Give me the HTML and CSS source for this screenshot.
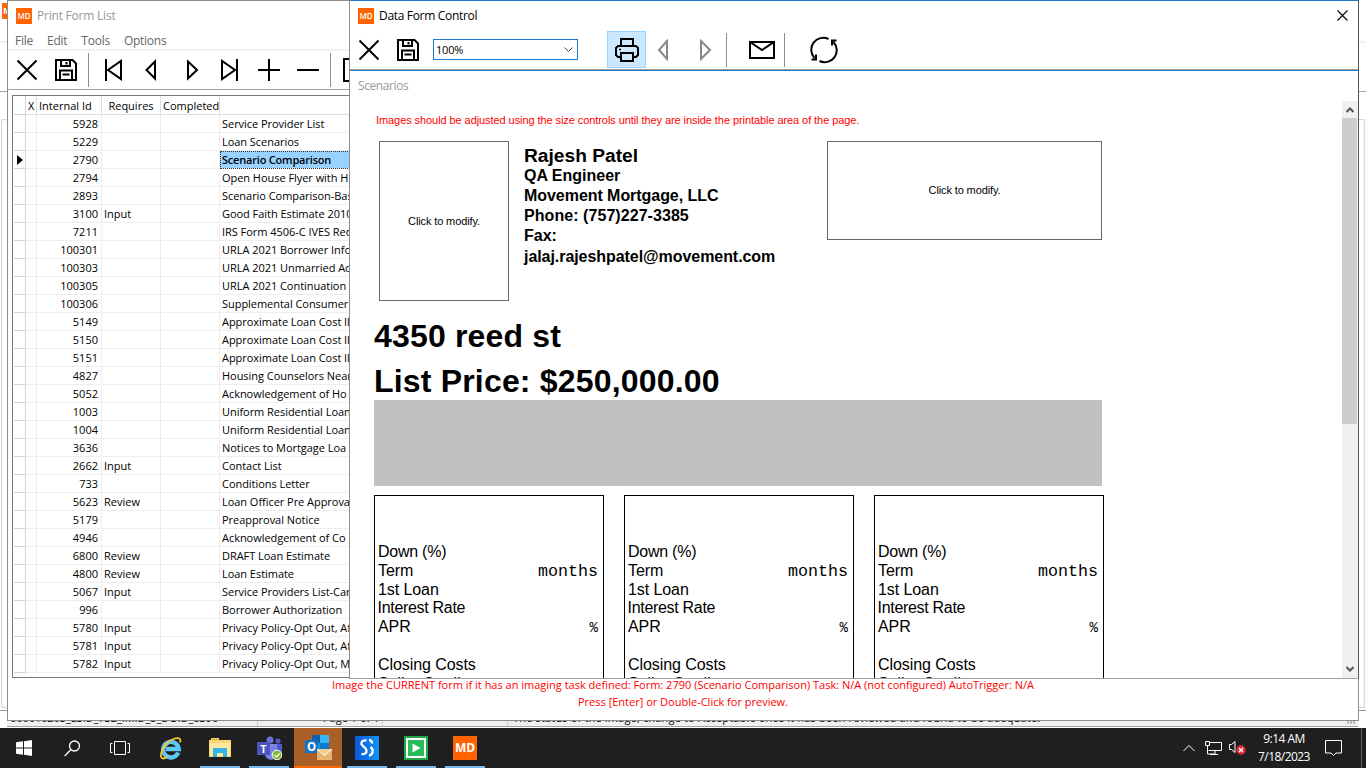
FILE: index.html
```
<!DOCTYPE html>
<html lang="en">
<head>
<meta charset="utf-8">
<title>Print Form List</title>
<link rel="stylesheet" href="styles.css">
</head>
<body>
<div class="desktop">
  <div class="back">
    <div class="back-title"><span class="back-logo">M</span></div>
    <div class="back-menu"></div>
    <div class="back-body"><div class="back-frame"></div></div>
    <div class="back-rule"></div>
    <div class="back-status">
      <span class="cell c1">000010203_ESID_732_IMID_5_DOID_8390</span>
      <span class="cell c2">Page 1 of 1</span>
      <span class="cell c3"></span>
      <span class="cell c4">The status of the image, change to Acceptable once it has been reviewed and found to be adequate.</span>
      <span class="grip"></span>
    </div>
  </div>

  <section class="window list-window">
    <header class="titlebar inactive"><span class="logo">MD</span><span class="title">Print Form List</span></header>
    <nav class="menu"><span>File</span><span>Edit</span><span>Tools</span><span>Options</span></nav>
    <div class="toolbar list-tools">
      <svg class="t-close" width="22" height="22" viewBox="0 0 22 22"><path d="M1.500 1.500l19 19M20.500 1.500l-19 19"/></svg>
      <svg class="t-save" width="22" height="22" viewBox="0 0 22 22"><path d="M1 1h16.500l3.500 3.500V21H1zM5 21V11.500h12V21M6 1v6h9V1M11.500 3v2.500M7.500 15.500h7"/></svg>
      <i class="sep s1"></i>
      <svg class="t-first" width="18" height="22" viewBox="0 0 18 22"><path d="M1 0v22M16 2v18L3 11z"/></svg>
      <svg class="t-prev" width="12" height="22" viewBox="0 0 12 22"><path d="M10 2.500v17L1.500 11z"/></svg>
      <svg class="t-next" width="12" height="22" viewBox="0 0 12 22"><path d="M1 2.500v17L10 11z"/></svg>
      <svg class="t-last" width="18" height="22" viewBox="0 0 18 22"><path d="M16 0v22M1 2v18L14 11z"/></svg>
      <svg class="t-plus" width="22" height="22" viewBox="0 0 22 22"><path d="M11 0v22M0 11h22"/></svg>
      <svg class="t-minus" width="22" height="22" viewBox="0 0 22 22"><path d="M0 11h22"/></svg>
      <i class="sep s2"></i>
      <svg class="t-page" width="22" height="24" viewBox="0 0 22 24"><path d="M1 1h20v22H1z"/></svg>
    </div>
    <div class="grid">
      <div class="row head"><span></span><span>X</span><span>Internal Id</span><span>Requires</span><span>Completed</span><span></span></div>
      <div class="rows" id="rows"></div>
    </div>
    <div class="hint"><p class="h1">Image the CURRENT form if it has an imaging task defined: Form: 2790 (Scenario Comparison) Task: N/A (not configured) AutoTrigger: N/A</p><p class="h2">Press [Enter] or Double-Click for preview.</p></div>
  </section>

  <section class="window form-window">
    <div class="form-chrome">
      <header class="titlebar"><span class="logo">MD</span><span class="title">Data Form Control</span>
        <svg class="win-close" width="11" height="11" viewBox="0 0 11 11"><path d="M.5.5l10 10M10.500.5l-10 10"/></svg></header>
      <div class="toolbar form-tools">
        <svg class="f-close" width="22" height="22" viewBox="0 0 22 22"><path d="M1.500 1.500l19 19M20.500 1.500l-19 19"/></svg>
        <svg class="f-save" width="22" height="22" viewBox="0 0 22 22"><path d="M1 1h16.500l3.500 3.500V21H1zM5 21V11.500h12V21M6 1v6h9V1M11.500 3v2.500M7.500 15.500h7"/></svg>
        <div class="combo"><span>100%</span><svg width="9" height="6" viewBox="0 0 9 6"><path d="M.5.5l4 4 4-4"/></svg></div>
        <div class="print"><svg width="24" height="24" viewBox="0 0 24 24"><path d="M6 8V1h12v7M6 19H3l-2-2v-7l2-2h18l2 2v7l-2 2h-3M6 15h12v8H6z"/><path class="dot" d="M4 11.500h2"/></svg></div>
        <svg class="f-prev dim" width="12" height="22" viewBox="0 0 12 22"><path d="M10 2v18L2 11z"/></svg>
        <svg class="f-next dim" width="12" height="22" viewBox="0 0 12 22"><path d="M1 2v18L10 11z"/></svg>
        <i class="sep s3"></i>
        <svg class="f-mail" width="26" height="18" viewBox="0 0 26 18"><path d="M1 1h24v16H1zM1 1l12 8L25 1"/></svg>
        <i class="sep s4"></i>
        <svg class="f-sync" width="28" height="28" viewBox="0 0 28 28"><path d="M18.500 3A12 12 0 0 0 4.500 22M9.500 25A12 12 0 0 0 23.500 6M1.500 23.500H6v-5M26.500 4.500H22v5"/></svg>
      </div>
    </div>
    <div class="tab">Scenarios</div>
    <div class="view">
      <main class="doc">
        <p class="warning">Images should be adjusted using the size controls until they are inside the printable area of the page.</p>
        <div class="profile">
          <div class="pic portrait">Click to modify.</div>
          <div class="contact">
            <p class="name">Rajesh Patel</p><p class="role">QA Engineer</p><p class="company">Movement Mortgage, LLC</p><p class="phone">Phone: (757)227-3385</p><p>Fax:</p><p class="mail">jalaj.rajeshpatel@movement.com</p>
          </div>
          <div class="pic banner">Click to modify.</div>
        </div>
        <h1 class="address">4350 reed st</h1>
        <h1 class="price">List Price: $250,000.00</h1>
        <div class="greybar"></div>
        <div class="cards">
          <div class="card"><p class="down-pay">Down (%)</p><p>Term<b class="months">months</b></p><p>1st Loan</p><p class="rate">Interest Rate</p><p>APR<b class="pct">%</b></p><p></p><p>Closing Costs</p><p>Seller Credit</p></div>
          <div class="card"><p class="down-pay">Down (%)</p><p>Term<b class="months">months</b></p><p>1st Loan</p><p class="rate">Interest Rate</p><p>APR<b class="pct">%</b></p><p></p><p>Closing Costs</p><p>Seller Credit</p></div>
          <div class="card"><p class="down-pay">Down (%)</p><p>Term<b class="months">months</b></p><p>1st Loan</p><p class="rate">Interest Rate</p><p>APR<b class="pct">%</b></p><p></p><p>Closing Costs</p><p>Seller Credit</p></div>
        </div>
      </main>
      <aside class="scroll">
        <svg width="8" height="6" viewBox="0 0 8 6"><path d="M.5 5L4 1.500 7.500 5"/></svg>
        <div class="thumb"></div>
        <svg class="down" width="8" height="6" viewBox="0 0 8 6"><path d="M.5 1L4 4.500 7.500 1"/></svg>
      </aside>
    </div>
  </section>

  <footer class="taskbar">
    <div class="task"><svg width="16" height="16" viewBox="0 0 16 16"><path fill="#fff" d="M0 2.300L7 1.300V7.500H0zM8 1.200L16 0V7.500H8zM0 8.500H7V14.700L0 13.700zM8 8.500H16V16L8 14.800z"/></svg></div>
    <div class="task"><svg width="17" height="17" viewBox="0 0 17 17"><circle cx="10.500" cy="6" r="5" fill="none" stroke="#fff" stroke-width="1.300"/><path d="M7 9.500L.7 16" stroke="#fff" stroke-width="1.300"/></svg></div>
    <div class="task"><svg width="20" height="14" viewBox="0 0 20 14" fill="none" stroke="#fff"><path d="M4.500.5h11v13h-11zM2.500 2.500h-2v9h2M17.500 2.500h2v9h-2"/></svg></div>
    <div class="task first-app"><svg width="24" height="24" viewBox="0 0 24 24"><path d="M19.200 16.500A7.800 7.800 0 1 1 19.700 13H7" fill="none" stroke="#5cc9f5" stroke-width="4.400"/><path d="M21 6.500C23 1 17 .5 10 5.500 3 11 .3 20 2.800 22c1.500 1 4-.2 5.500-1.500" fill="none" stroke="#f6c52c" stroke-width="1.800"/></svg></div>
    <div class="task open"><svg width="22" height="20" viewBox="0 0 22 20"><path d="M0 2h2V0h8v2h12v17H0z" fill="#f8d775"/><path d="M1 5h20v13H1z" fill="#ffe9a0"/><path d="M3 1h6v1H3z" fill="#e8a020"/><path d="M4 10h14v9h-4v-4H8v4H4z" fill="#35b4e8"/></svg></div>
    <div class="task open"><svg width="25" height="24" viewBox="0 0 25 24"><circle cx="13" cy="4" r="3.500" fill="#6b70d8"/><circle cx="21" cy="5" r="2.600" fill="#5059c9"/><path d="M17 8h8v8a5 5 0 0 1-7 4z" fill="#5059c9"/><path d="M8 8h12v8a6 6 0 0 1-12 3z" fill="#7b83eb"/><path d="M0 6h13v13H0z" fill="#4b53bc"/><text x="3.200" y="16.500" fill="#fff" font-family="Open Sans" font-size="11" font-weight="700">T</text><circle cx="20" cy="19" r="4.800" fill="#80b82d" stroke="#fff"/><path d="M17.500 19l2 2 3-3.500" fill="none" stroke="#fff" stroke-width="1.300"/></svg></div>
    <div class="task open active"><svg width="27" height="26" viewBox="0 0 27 26"><path d="M7 0h17v17H7z" fill="#1490df"/><path d="M7 0h8v8H7z" fill="#0b60a8"/><path d="M15 0h9v8h-9z" fill="#37b8f2"/><path d="M15 8h9v8h-9z" fill="#0f78d4"/><path d="M0 5h13v13H0z" fill="#0f72c4"/><text x="2" y="16" fill="#fff" font-family="Open Sans" font-size="11.500" font-weight="700">O</text><path d="M12 14h15v11H12z" fill="#e9b36d"/><path d="M12 14l7.500 6.500L27 14" fill="#f4cd90" stroke="#fff"/></svg></div>
    <div class="task open"><svg width="24" height="24" viewBox="0 0 24 24"><defs><linearGradient id="blue"><stop stop-color="#0758d8"/><stop offset="1" stop-color="#1692f5"/></linearGradient></defs><path d="M0 0h24v24H0z" fill="url(#blue)"/><path d="M11.500 4.500C8 4 6 5.500 6.500 8c.5 2.500 4.500 3 5 6.500.3 2.500-2 4-5 3.500" fill="none" stroke="#fff" stroke-width="2.400"/><path d="M15.500 11c3.500 2.500 2.500 8-1.500 8.500M14 4c2 .2 3 1.500 3.200 3.500" fill="none" stroke="#fff" stroke-width="2.400"/></svg></div>
    <div class="task open"><svg width="24" height="24" viewBox="0 0 24 24"><path d="M0 0h24v24H0z" fill="#1fa84c"/><path d="M3 3h18v18H3z" fill="#2abb5b" stroke="#fff" stroke-width="2"/><path d="M8.500 7.500v9l8-4.500z" fill="#fff"/></svg></div>
    <div class="task open"><span class="app-logo">MD</span></div>
    <div class="tray">
      <svg class="chev" width="12" height="8" viewBox="0 0 12 8"><path d="M.5 7L6 1.500 11.500 7"/></svg>
      <svg class="net" width="17" height="14" viewBox="0 0 17 14"><path d="M5 1.500h11.500v8H3.500M.5.500h4v4h-4zM2.500 4.500v8.500H10M10 9.500V13M5 13.500h8"/></svg>
      <svg class="vol" width="18" height="16" viewBox="0 0 18 16"><path d="M.5 4.500h2l3.500-3v11l-3.500-3h-2z"/><circle cx="12" cy="10" r="4.700" fill="#e02b35" stroke="none"/><path d="M10 8l4 4M14 8l-4 4" stroke-width="1.400"/></svg>
      <div class="clock"><span>9:14 AM</span><span>7/18/2023</span></div>
      <svg class="note" width="17" height="17" viewBox="0 0 17 17"><path d="M.5.5h16v12.500H11l-2.500 2.500L6 13H.5z"/></svg>
      <i class="peek"></i>
    </div>
  </footer>
</div>
<script src="rows.js"></script>
</body>
</html>
```

FILE: rows.js
```
const forms = [
  [5928, '', 'Service Provider List'], [5229, '', 'Loan Scenarios'], [2790, '', 'Scenario Comparison'],
  [2794, '', 'Open House Flyer with H'], [2893, '', 'Scenario Comparison-Bas'], [3100, 'Input', 'Good Faith Estimate 2010'],
  [7211, '', 'IRS Form 4506-C IVES Req'], [100301, '', 'URLA 2021 Borrower Info'], [100303, '', 'URLA 2021 Unmarried Ad'],
  [100305, '', 'URLA 2021 Continuation'], [100306, '', 'Supplemental Consumer'], [5149, '', 'Approximate Loan Cost Ill'],
  [5150, '', 'Approximate Loan Cost Ill'], [5151, '', 'Approximate Loan Cost Ill'], [4827, '', 'Housing Counselors Near'],
  [5052, '', 'Acknowledgement of Ho'], [1003, '', 'Uniform Residential Loan'], [1004, '', 'Uniform Residential Loan'],
  [3636, '', 'Notices to Mortgage Loa'], [2662, 'Input', 'Contact List'], [733, '', 'Conditions Letter'],
  [5623, 'Review', 'Loan Officer Pre Approva'], [5179, '', 'Preapproval Notice'], [4946, '', 'Acknowledgement of Co'],
  [6800, 'Review', 'DRAFT Loan Estimate'], [4800, 'Review', 'Loan Estimate'], [5067, 'Input', 'Service Providers List-Can'],
  [996, '', 'Borrower Authorization'], [5780, 'Input', 'Privacy Policy-Opt Out, Af'], [5781, 'Input', 'Privacy Policy-Opt Out, Af'],
  [5782, 'Input', 'Privacy Policy-Opt Out, M']
];
document.getElementById('rows').innerHTML = forms.map(([id, req, name]) =>
  `<div class="row${id === 2790 ? ' current' : ''}"><span></span><span></span><span>${id}</span><span>${req}</span><span></span><span>${name}</span></div>`
).join('');
```

FILE: styles.css
```
* { box-sizing: border-box; }
body { margin: 0; background: #fff; font-family: "Open Sans", "Noto Sans", sans-serif; font-size: 11px; color: #000; overflow: hidden; }
p, h1 { margin: 0; }
svg { display: block; flex: none; }
.desktop { position: relative; width: 1366px; height: 768px; overflow: hidden; }

.back { height: 728px; display: flex; flex-direction: column; }
.back-title { height: 43px; border-bottom: 2px solid #f0f0f0; padding: 3px 0 0 2px; }
.back-logo { display: block; width: 16px; height: 16px; background: #ff6200; color: #fff; font-size: 9px; font-weight: 700; line-height: 15px; padding-left: 1px; }
.back-menu { height: 49px; border-bottom: 1px solid #a0a0a0; }
.back-body { height: 618px; padding: 27px 1px 2px 1px; }
.back-frame { height: 589px; border: 1px solid #dcdcdc; box-shadow: inset 0 0 0 1px #f4f4f4; }
.back-rule { height: 1px; background: #999; }
.back-status { height: 16px; margin: 0 8px 0 7px; display: flex; border-bottom: 1px solid #a0a0a0; background: #f0f0f0; line-height: 14px; position: relative; }
.cell { flex: none; white-space: nowrap; overflow: hidden; border-right: 1px solid #d0d0d0; }
.c1 { width: 251px; padding-left: 3px; letter-spacing: -.07px; }
.c2 { width: 125px; padding-left: 65px; }
.c3 { width: 125px; }
.c4 { flex: 1; padding-left: 5px; border: 0; letter-spacing: .17px; }
.grip { width: 8px; height: 4px; align-self: flex-end; margin: 0 3px 2px 0; background: repeating-linear-gradient(90deg, #bbb 0 2px, transparent 2px 3px); }

.window { position: absolute; top: 0; background: #fff; display: flex; flex-direction: column; overflow: hidden; }
.list-window { left: 7px; width: 1352px; height: 721px; border: 1px solid #8c8c8c; }
.form-window { left: 349px; width: 1010px; height: 679px; border-right: 1px solid #555; border-bottom: 1px solid #a0a0a0; border-left: 1px solid #8c8c8c; }
.form-chrome { height: 71px; margin: 0 -1px; border: 1px solid #1979ca; box-shadow: inset 0 -1px #a0a0a0; flex: none; }
.titlebar { height: 29px; display: flex; align-items: center; font-size: 12px; letter-spacing: -.32px; padding-left: 8px; flex: none; }
.inactive { color: #999; letter-spacing: -.22px; }
.logo { width: 16px; height: 16px; background: #ff6200; color: #fff; font-size: 8px; font-weight: 600; line-height: 15px; text-align: center; margin-right: 5px; letter-spacing: 0; }
.win-close { margin: 0 10px 0 auto; stroke: #000; stroke-width: 1.1; }
.menu { height: 21px; border-bottom: 2px solid #f0f0f0; display: flex; gap: 14px; padding-left: 7px; font-size: 12px; letter-spacing: -.25px; line-height: 22px; color: #666; flex: none; }

.toolbar { display: flex; align-items: center; }
.toolbar svg { fill: none; stroke: #000; stroke-width: 2; }
.toolbar .dim { stroke: #888; }
.sep { width: 1px; height: 34px; background: #8c8c8c; flex: none; }
.list-tools { height: 39px; border-bottom: 1px solid #a0a0a0; flex: none; }
.t-close { margin-left: 8px; } .t-save { margin-left: 17px; } .s1 { margin-left: 11px; }
.t-first { margin-left: 16px; } .t-prev { margin-left: 22px; } .t-next { margin-left: 30px; }
.t-last { margin-left: 22px; } .t-plus { margin-left: 19px; } .t-minus { margin-left: 17px; }
.s2 { margin-left: 11px; } .t-page { margin-left: 12px; }

.grid { margin: 5px 4px 0; height: 583px; border: 1px solid #777; flex: none; padding: 0 1px; }
.row { height: 18px; display: grid; grid-template-columns: 12px 11px 65px 59px 59px 1fr; line-height: 17px; white-space: nowrap; }
.row > span { border-right: 1px solid #eee; border-bottom: 1px solid #eee; padding: 0 2px; overflow: hidden; }
.row > span:first-child { border-color: #d4d4d4; }
.row > span:nth-child(3) { text-align: right; padding-right: 3px; }
.row > span:last-child { letter-spacing: -.04px; }
.head { height: 19px; line-height: 19px; }
.head > span { border-color: #ddd; }
.head > span:nth-child(3) { text-align: left; }
.head > span:nth-child(4) { text-align: center; }
.current > span:first-child { display: flex; align-items: center; padding: 0 0 0 3px; }
.current > span:first-child::before { content: ""; border: 5px solid transparent; border-left: 6px solid #000; border-right: 0; }
.current > span:last-child { background: #99d1ff; outline: 1px dotted #333; outline-offset: -1px; font-weight: 600; letter-spacing: -.2px; }
.hint { text-align: center; color: #f00; line-height: 17px; font-size: 11px; margin-top: -2px; }

.form-tools { height: 39px; }
.f-close { margin-left: 8px; } .f-save { margin-left: 17px; }
.combo { margin-left: 14px; width: 145px; height: 21px; border: 1px solid #1979ca; display: flex; align-items: center; justify-content: space-between; padding: 0 4px 0 2px; letter-spacing: -.2px; flex: none; }
.toolbar .combo svg { stroke: #444; stroke-width: 1; }
.print { margin-left: 29px; width: 39px; height: 37px; background: #cce8ff; border: 1px solid #99d1ff; display: flex; align-items: center; justify-content: center; flex: none; }
.toolbar .print .dot { stroke-width: 1.500; }
.f-prev { margin-left: 11px; } .f-next { margin-left: 31px; } .s3 { margin-left: 14px; }
.f-mail { margin-left: 22px; } .s4 { margin-left: 9px; } .f-sync { margin-left: 25px; }
.tab { height: 30px; line-height: 30px; padding-left: 8px; color: #999; flex: none; font-size: 12px; letter-spacing: -.4px; }
.view { flex: 1; min-height: 0; display: flex; }
.doc { flex: 1; padding: 12px 0 0 24px; font-family: "Liberation Sans", Arial, sans-serif; overflow: hidden; }
.warning { color: #f00; font-size: 11px; line-height: 15px; padding-left: 2px; letter-spacing: -.075px; }
.profile { display: flex; margin: 13px 0 0 5px; height: 160px; }
.pic { border: 1px solid #666; display: flex; align-items: center; justify-content: center; flex: none; letter-spacing: -.12px; }
.portrait { width: 130px; height: 160px; }
.banner { width: 275px; height: 99px; padding-bottom: 2px; }
.contact { width: 318px; padding: 5px 0 0 15px; font-weight: 700; font-size: 16px; line-height: 20px; flex: none; }
.name { font-size: 19.200px; }
.company { letter-spacing: -.05px; }
.phone { letter-spacing: .06px; }
.mail { letter-spacing: -.06px; padding-top: 1px; }
h1 { font-size: 32px; font-weight: 700; line-height: 45px; letter-spacing: .18px; }
.address { margin-top: 13px; }
.greybar { width: 728px; height: 86px; background: #c0c0c0; margin-top: -4px; }
.cards { display: flex; gap: 20px; margin-top: 9px; }
.card { width: 230px; height: 300px; border: 1px solid #000; padding: 46px 4px 0 3px; font-size: 16px; line-height: 19px; flex: none; }
.card p { height: 18.8px; display: flex; justify-content: space-between; letter-spacing: -.08px; }
.card .rate { letter-spacing: -.3px; margin-left: -.5px; }
.card .down-pay { letter-spacing: -.25px; }
.card b { font-family: "Liberation Mono", monospace; font-weight: 400; font-size: 16.67px; letter-spacing: 0; padding: 1px 1px 0 0; }
.card .pct { font-size: 14px; padding-top: 2px; }
.scroll { width: 16px; background: #f0f0f0; display: flex; flex-direction: column; align-items: center; padding: 6px 1px 6px 0; flex: none; }
.scroll svg { fill: none; stroke: #555; stroke-width: 2; }
.thumb { width: 15px; height: 306px; margin-top: 5px; background: #cdcdcd; }
.down { margin-top: auto; }

.taskbar { height: 40px; background: #1f1f1f; display: flex; }
.task { width: 48px; height: 40px; display: flex; align-items: center; justify-content: center; position: relative; flex: none; }
.first-app { margin-left: 3px; }
.open { margin-left: 1px; }
.open::after { content: ""; position: absolute; left: 4px; right: 4px; bottom: 0; height: 2px; background: #76b9ed; }
.active { background: #a85f28; }
.active::after { left: 0; right: 0; background: #ff6a00; }
.app-logo { width: 24px; height: 24px; background: #ff6200; color: #fff; font-weight: 700; line-height: 23px; text-align: center; font-size: 12px; }
.tray { margin-left: auto; display: flex; align-items: center; color: #fff; }
.tray svg { fill: none; stroke: #fff; }
.net { margin-left: 10px; } .vol { margin-left: 7px; }
.clock { width: 74px; display: flex; flex-direction: column; align-items: center; font-size: 12px; letter-spacing: -.55px; line-height: 18px; }
.note { margin-left: 4px; } .peek { width: 1px; height: 40px; background: #666; margin: 0 4px 0 19px; }
```
